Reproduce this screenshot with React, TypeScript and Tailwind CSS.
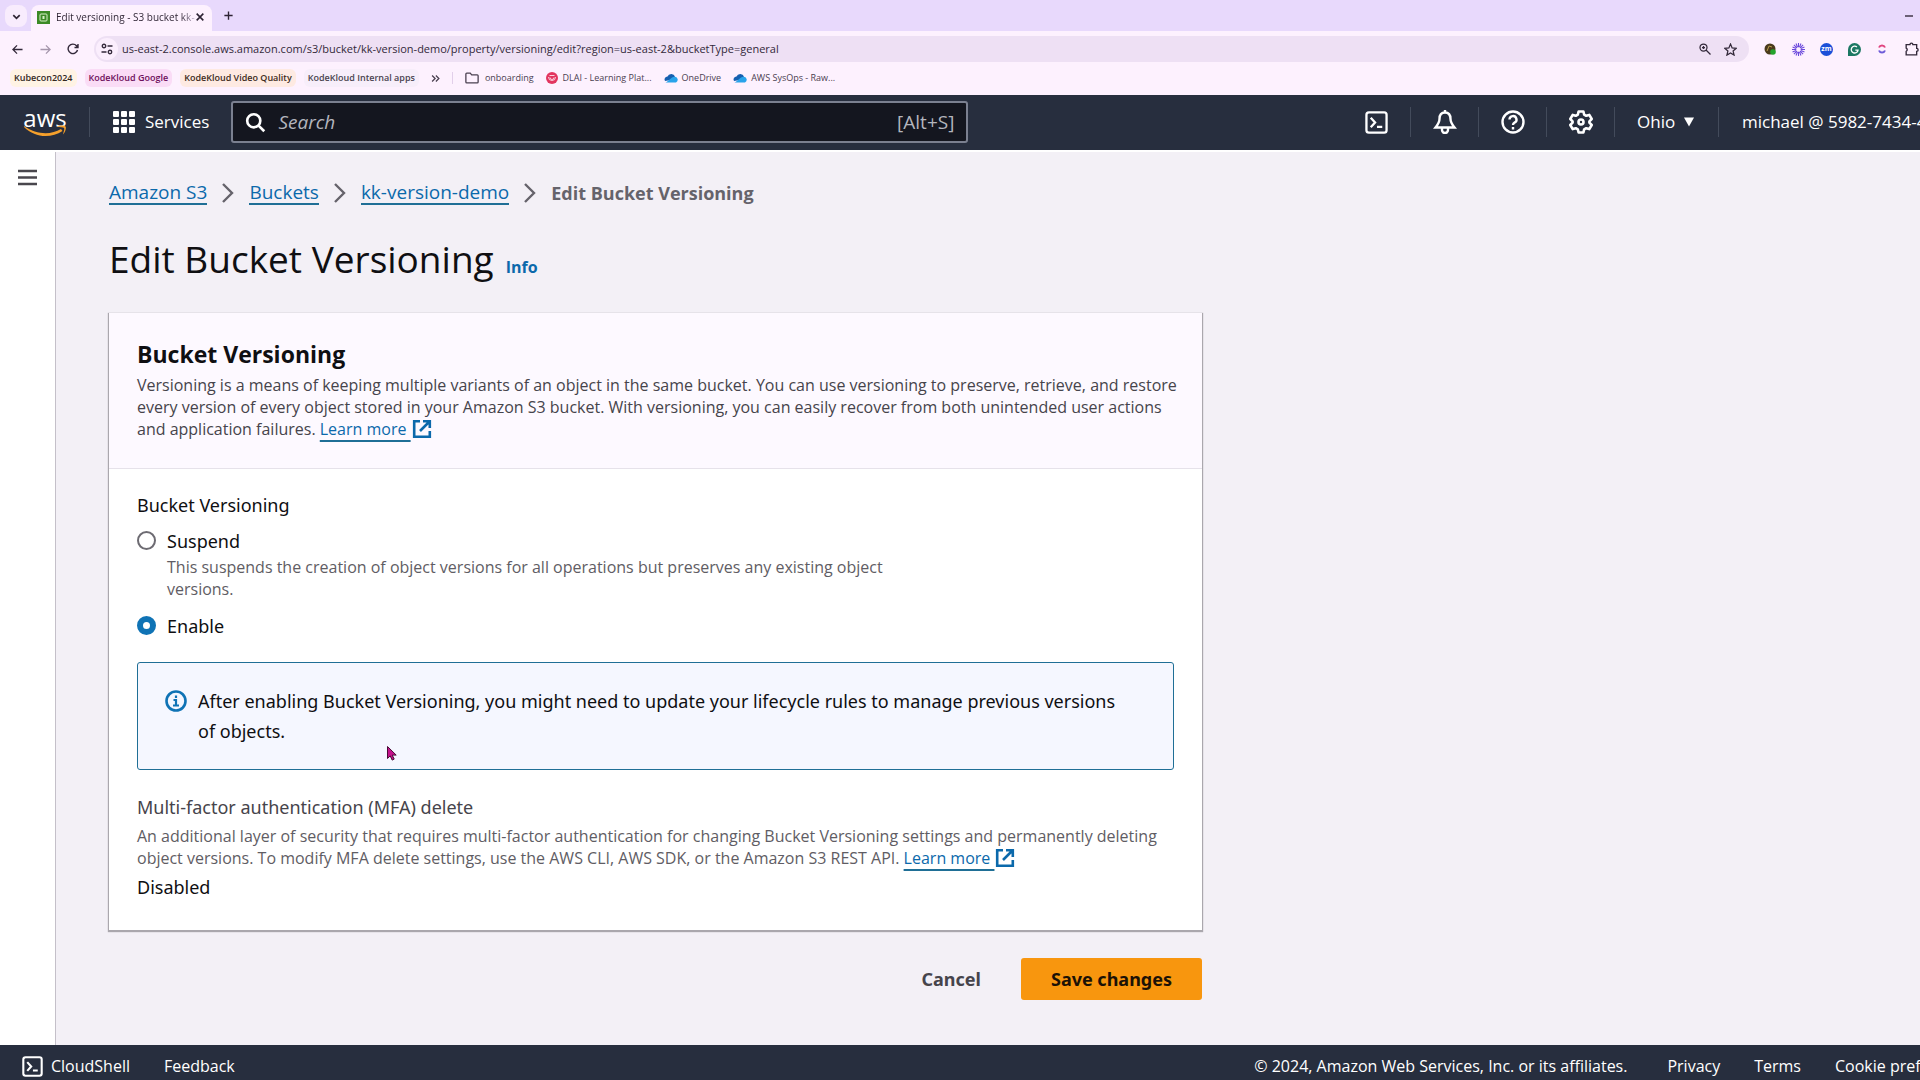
import { useState, type ReactNode } from "react";

function Stroke({ size, children, width = 2, className = "" }: { size: number; children: ReactNode; width?: number; className?: string }) {
  return (
    <svg width={size} height={size} viewBox="0 0 24 24" fill="none" stroke="currentColor" strokeWidth={width} className={"shrink-0 " + className} aria-hidden="true">
      {children}
    </svg>
  );
}

function Terminal({ size }: { size: number }) {
  return (
    <Stroke size={size} width={2.4}>
      <rect x="1.5" y="1.5" width="21" height="21" rx="2.5" />
      <path d="M6 7l4.5 5L6 17M12.5 16.5h5.5" />
    </Stroke>
  );
}

function External() {
  return (
    <svg width="20" height="20" viewBox="0 0 20 20" fill="none" stroke="currentColor" strokeWidth="2.6" className="ml-px inline-block align-[-4px]" aria-hidden="true">
      <path d="M8 2.2H2.2v15.6h15.6V12M11 2.2h6.8V9M17.5 2.5L8 12" />
    </svg>
  );
}

function LearnMore() {
  return (
    <a href="#" className="whitespace-nowrap text-[#0b69ab] underline decoration-[#1f6f96] decoration-2 underline-offset-[5px]">
      Learn more&nbsp;<External />
    </a>
  );
}

function Cloud() {
  return (
    <svg width="14" height="10" viewBox="0 0 14 10" className="shrink-0" aria-hidden="true">
      <path d="M3.5 3.4A4 4 0 0 1 11 3.6L7 7 1 8A3 3 0 0 1 3.5 3.4z" fill="#1560b0" />
      <path d="M2 9.4L8 4.6a5 5 0 0 1 3-.9 3 3 0 0 1 1 5.7H3a3 3 0 0 1-2-1z" fill="#28a3ea" />
    </svg>
  );
}

function TabStrip() {
  return (
    <div className="flex h-[31px] items-end bg-[#e8d9fc] text-[#2d2333]">
      <button aria-label="Search tabs" className="mb-1 ml-[5px] flex h-[22px] w-[22px] items-center justify-center rounded-lg bg-[#f8ecfd]">
        <Stroke size={11} width={3.6}><path d="M5 9l7 7 7-7" /></Stroke>
      </button>
      <div className="ml-1 flex h-[26px] w-[181px] items-center rounded-t-lg bg-[#fdf1fe] pb-[2px] pl-[6px] pr-2">
        <svg width="13" height="13" viewBox="0 0 13 13" className="shrink-0" aria-hidden="true">
          <rect width="13" height="13" fill="#3c8a26" />
          <rect x="3" y="3" width="7" height="7" rx="1" fill="none" stroke="#d8f0c8" />
          <path d="M5.5 5h2v3h-2z" fill="#d8f0c8" />
        </svg>
        <span className="ml-[6px] whitespace-nowrap bg-gradient-to-r from-[#2d2333] from-90% to-[#cfc0d6] bg-clip-text text-[10px] text-transparent">
          Edit versioning - S3 bucket kk-
        </span>
        <button aria-label="Close tab" className="ml-auto"><Stroke size={10} width={3.8}><path d="M4 4l16 16M20 4L4 20" /></Stroke></button>
      </div>
      <button aria-label="New tab" className="mb-[10px] ml-[11px]"><Stroke size={11} width={3}><path d="M12 3v18M3 12h18" /></Stroke></button>
      <button aria-label="Minimize" className="mb-[11px] ml-auto mr-[7px]"><Stroke size={8} width={4}><path d="M0 12h24" /></Stroke></button>
    </div>
  );
}

function AddressRow() {
  return (
    <div className="flex h-9 items-center text-[#33293a]">
      <button aria-label="Back" className="ml-3"><Stroke size={11} width={2.8}><path d="M23 12H2M11 3l-9 9 9 9" /></Stroke></button>
      <button aria-label="Forward" className="ml-[17px] text-[#a596ac]"><Stroke size={11} width={2.8}><path d="M1 12h21M13 3l9 9-9 9" /></Stroke></button>
      <button aria-label="Reload" className="ml-4"><Stroke size={12} width={2.8}><path d="M21 14a9.500 9.500 0 1 1-2-8.500L22 9M22 2v7h-7" /></Stroke></button>
      <div className="ml-[15px] flex h-[26px] flex-1 items-center rounded-full bg-[#eee0f4] pl-[2px] pr-3">
        <button aria-label="Site information" className="flex h-[22px] w-[22px] items-center justify-center rounded-full bg-[#fbeefd]">
          <Stroke size={12} width={2.6}><circle cx="6" cy="6" r="3.500" /><path d="M13 6h10M1 18h10" /><circle cx="18" cy="18" r="3.500" /></Stroke>
        </button>
        <input aria-label="Address" className="ml-1 flex-1 bg-transparent text-[11px] outline-none" defaultValue="us-east-2.console.aws.amazon.com/s3/bucket/kk-version-demo/property/versioning/edit?region=us-east-2&bucketType=general" />
        <button aria-label="Zoom"><Stroke size={12} width={2.5}><circle cx="9" cy="9" r="7" /><path d="M14 14l9 9M6 9h6M9 6v6" /></Stroke></button>
        <button aria-label="Bookmark this page" className="ml-[13px]"><Stroke size={13} width={2.3}><path d="M12 2l3 7.200 7.500.6-5.700 5 1.800 7.500L12 18.300l-6.600 4 1.800-7.500-5.700-5 7.500-.6z" /></Stroke></button>
      </div>
      <div className="ml-[15px] flex items-center">
        <svg width="12" height="12" viewBox="0 0 12 12" aria-hidden="true"><circle cx="6" cy="6" r="5.500" fill="#4a3a1c" /><path d="M3 8l2-5 3 1" stroke="#b79a4a" fill="none" /><circle cx="9" cy="9" r="2.800" fill="#24a42c" /></svg>
        <svg width="13" height="13" viewBox="0 0 24 24" stroke="#6a48dc" strokeWidth="2" className="ml-4" aria-hidden="true"><path d="M12 0v8M12 16v8M0 12h8M16 12h8M3.500 3.500L9 9M15 15l5.500 5.500M20.500 3.500L15 9M9 15l-5.500 5.500M7.400 1l2.800 6.800M13.800 16.200L16.600 23M1 16.600l6.800-2.800M16.200 10.200L23 7.400M1 7.400l6.800 2.800M16.200 13.800L23 16.600M16.600 1l-2.800 6.800M10.200 16.200L7.400 23" /></svg>
        <span className="ml-[15px] flex h-[13px] w-[13px] items-center justify-center rounded-full bg-[#1c50d8] text-[7px] font-bold text-white">zm</span>
        <svg width="13" height="13" viewBox="0 0 24 24" className="ml-[15px]" aria-hidden="true"><path d="M12 0a12 12 0 1 1 0 24H0V12A12 12 0 0 1 12 0z" fill="#1c7863" /><path d="M16.500 7.500a6.300 6.300 0 1 0 2 5.500h-5" stroke="#fff" strokeWidth="2.400" fill="none" /></svg>
        <svg width="10" height="12" viewBox="0 0 10 12" fill="none" strokeWidth="2" className="ml-4" aria-hidden="true"><path d="M2 4.500a3.200 3.200 0 0 1 6 0" stroke="#e0447e" /><path d="M2 7.500a3.200 3.200 0 0 0 6 0" stroke="#6d5bd8" /></svg>
        <button aria-label="Extensions" className="ml-[18px] mr-px">
          <Stroke size={14} width={2.3}><path d="M2 4.500h6.500a2.500 2.500 0 0 1 5 0H20V11a2.500 2.500 0 0 1 0 5v6H2v-6a3 3 0 0 0 0-5.500z" /></Stroke>
        </button>
      </div>
    </div>
  );
}

function BookmarkRow() {
  const chip = "rounded-md px-1 py-[2px] font-semibold";
  return (
    <nav aria-label="Bookmarks" className="flex h-7 items-center whitespace-nowrap pb-[6px] pl-[10px] text-[9px] text-[#4a4050]">
      <a href="#" className={chip + " bg-[#fff3e4] text-[#33291f]"}>Kubecon2024</a>
      <a href="#" className={chip + " ml-2 bg-[#fadcf6] text-[#6d0f5c]"}>KodeKloud Google</a>
      <a href="#" className={chip + " ml-2 bg-[#feeae2] text-[#3d2a20]"}>KodeKloud Video Quality</a>
      <a href="#" className={chip + " ml-2 bg-[#f7eefa] text-[#4a4450]"}>KodeKloud Internal apps</a>
      <button aria-label="More bookmarks" className="ml-3"><Stroke size={9} width={3.4}><path d="M3 4l8 8-8 8M13 4l8 8-8 8" /></Stroke></button>
      <span className="ml-3 h-3 w-px bg-[#e2cfea]" />
      <a href="#" className="ml-3 flex items-center gap-[6px]">
        <Stroke size={14} width={2.2}><path d="M1.500 5a1.500 1.500 0 0 1 1.500-1.500h6l2.500 3H21A1.500 1.500 0 0 1 22.500 8v11a1.500 1.500 0 0 1-1.500 1.500H3A1.500 1.500 0 0 1 1.500 19z" /></Stroke>
        onboarding
      </a>
      <a href="#" className="ml-3 flex items-center gap-[5px]">
        <svg width="12" height="12" viewBox="0 0 12 12" fill="none" aria-hidden="true"><circle cx="6" cy="6" r="6" fill="#e2355f" /><path d="M2.500 5a3.500 3.500 0 0 0 7 0M4 5.500a2 2 0 0 0 4 0M3.500 3.500h5" stroke="#fbd0dc" /></svg>
        DLAI - Learning Plat...
      </a>
      <a href="#" className="ml-3 flex items-center gap-1"><Cloud />OneDrive</a>
      <a href="#" className="ml-3 flex items-center gap-1"><Cloud />AWS SysOps - Raw...</a>
    </nav>
  );
}

function Divider({ className = "" }: { className?: string }) {
  return <span className={"h-[30px] w-px shrink-0 bg-[#434b5b] " + className} />;
}

function Header() {
  return (
    <header className="flex h-[55px] items-center whitespace-nowrap bg-[#272e3e] pb-px text-[17px] text-white">
      <a href="#" aria-label="AWS console home" className="ml-[23px] flex w-11 flex-col items-center">
        <span className="-mb-1 text-[24px] leading-5">aws</span>
        <svg width="44" height="13" viewBox="0 0 44 13" aria-hidden="true">
          <path d="M1 2C14 11 28 11 38 5l1.500 2C28 14.500 12 14 1 3z" fill="#f5a02c" />
          <path d="M33.500 2.800c4-1.600 8-1.500 9-.4s0 5.500-2.600 8.100c.9-2.900 1.900-5.800 1.200-6.500s-4.200-.6-7.600-1.200z" fill="#f5a02c" />
        </svg>
      </a>
      <Divider className="ml-[22px]" />
      <button className="ml-[23px] flex items-center gap-[10px]">
        <svg width="22" height="22" viewBox="0 0 22 22" fill="currentColor" aria-hidden="true">
          {[0, 8, 16].map((y) => [0, 8, 16].map((x) => <rect key={x + "-" + y} x={x} y={y} width="6" height="6" rx="1" />))}
        </svg>
        Services
      </button>
      <label className="ml-[22px] flex h-[42px] w-[737px] items-center rounded-[3px] border-2 border-[#7b8090] bg-[#14161f] px-3">
        <Stroke size={21} width={3}><circle cx="10" cy="10" r="7.500" /><path d="M15.500 15.500L22 22" /></Stroke>
        <input type="search" aria-label="Search" placeholder="Search" className="ml-3 min-w-0 flex-1 bg-transparent text-[19px] outline-none placeholder:italic placeholder:text-[#b3b5bd]" />
        <span className="text-[19px] text-[#b3b5bd]">[Alt+S]</span>
      </label>
      <div className="ml-auto flex items-center">
        <button aria-label="CloudShell" className="flex w-[68px] justify-center"><Terminal size={23} /></button>
        <Divider />
        <button aria-label="Notifications" className="flex w-[67px] justify-center">
          <Stroke size={24} width={2.4}><path d="M12 2.500c-4 0-5.500 3-5.500 6.500 0 3.500-2 6-4 8.500h19c-2-2.500-4-5-4-8.500 0-3.500-1.500-6.500-5.500-6.500zM12 0v3M9 18v2a3 3 0 0 0 6 0v-2" /></Stroke>
        </button>
        <Divider />
        <button aria-label="Help" className="flex w-[67px] justify-center">
          <Stroke size={24} width={2.4}><circle cx="12" cy="12" r="10.500" /><path d="M8.500 9.500a3.500 3.500 0 1 1 5 3.200c-1 .5-1.500 1-1.500 2.300M12 17v2.400" /></Stroke>
        </button>
        <Divider />
        <button aria-label="Settings" className="flex w-[67px] justify-center">
          <Stroke size={24} width={2.6}>
            <path strokeLinejoin="round" d="M9.600 1.500h4.800l.8 3.200 2 1.100 3.100-.9 2.400 4.100L20.400 11.300v1.400l2.300 2.300-2.400 4.100-3.100-.9-2 1.100-.8 3.200H9.600l-.8-3.200-2-1.100-3.100.9L1.300 15l2.300-2.300v-1.400L1.300 9l2.400-4.100 3.100.9 2-1.100z" />
            <circle cx="12" cy="12" r="2.500" />
          </Stroke>
        </button>
        <Divider />
        <button className="flex w-[103px] items-center pl-[22px]">
          Ohio
          <svg width="12" height="10" viewBox="0 0 12 10" fill="currentColor" className="ml-2" aria-hidden="true"><path d="M1 .5h10L6 9.500z" /></svg>
        </button>
        <Divider />
        <button className="w-[201px] overflow-hidden pl-[23px] text-left">michael @ 5982-7434-4</button>
      </div>
    </header>
  );
}

function Crumb({ children }: { children: ReactNode }) {
  return (
    <li className="flex items-center">
      <a href="#" className="border-b-2 border-[#1f6f96] leading-[22px] text-[#0b69ab]">{children}</a>
      <svg width="14" height="20" viewBox="0 0 14 20" fill="none" stroke="#65636b" strokeWidth="2.400" className="mx-[14px]" aria-hidden="true"><path d="M2 1l9 9-9 9" /></svg>
    </li>
  );
}

function Radio({ label, checked, onChange, children }: { label: string; checked: boolean; onChange: () => void; children?: ReactNode }) {
  return (
    <label className="flex items-start gap-[11px]">
      <input
        type="radio"
        name="versioning"
        checked={checked}
        onChange={onChange}
        className="mt-[5px] h-[19px] w-[19px] shrink-0 appearance-none rounded-full border-2 border-[#6d6b72] bg-white checked:border-[6px] checked:border-[#0f73b5]"
      />
      <span className="text-[18px] leading-[30px] text-[#0f0f12]">
        {label}
        {children}
      </span>
    </label>
  );
}

export default function App() {
  const [enabled, setEnabled] = useState(true);
  return (
    <div className="flex min-h-screen flex-col overflow-hidden bg-[#f3f0f6] font-['Open_Sans',sans-serif]">
      <div className="bg-[#fdf1fe]">
        <TabStrip />
        <AddressRow />
        <BookmarkRow />
      </div>
      <Header />
      <div className="flex flex-1 border-t-2 border-white">
        <aside className="w-14 shrink-0 border-r border-[#c4c0c9] bg-white">
          <button aria-label="Open navigation" className="ml-[18px] mt-4">
            <svg width="19" height="19" viewBox="0 0 19 19" stroke="#49474d" strokeWidth="2.600" aria-hidden="true"><path d="M0 3h19M0 9.500h19M0 16h19" /></svg>
          </button>
        </aside>
        <main className="flex-1 pl-[53px]">
          <nav aria-label="Breadcrumb" className="mt-[29px]">
            <ol className="flex h-6 items-center text-[19px]">
              <Crumb>Amazon S3</Crumb>
              <Crumb>Buckets</Crumb>
              <Crumb>kk-version-demo</Crumb>
              <li className="text-[18px] font-bold text-[#65636b]">Edit Bucket Versioning</li>
            </ol>
          </nav>
          <div className="mt-[30px] flex items-baseline gap-3">
            <h1 className="text-[37px] leading-[48px] text-[#0f0f12]">Edit Bucket Versioning</h1>
            <a href="#" className="text-[16px] font-bold text-[#0b69ab]">Info</a>
          </div>
          <form className="mt-[30px] max-w-[1093px]" onSubmit={(e) => e.preventDefault()}>
            <section className="bg-white font-['Noto_Sans',sans-serif] shadow-[0_1px_1px_1px_rgba(60,58,66,0.4)]">
              <div className="border-b border-[#e6e2ea] bg-[#fdf9ff] pb-[28px] pl-7 pr-5 pt-[23px] font-['Open_Sans',sans-serif]">
                <h2 className="text-[23px] font-bold leading-[36px] text-[#0f0f12]">Bucket Versioning</h2>
                <p className="mt-[2px] text-[16px] leading-[22px] text-[#46444b]">
                  Versioning is a means of keeping multiple variants of an object in the same bucket. You can use versioning to preserve, retrieve, and restore every version of every object stored in your Amazon S3 bucket. With versioning, you can easily recover from both unintended user actions and application failures. <LearnMore />
                </p>
              </div>
              <div className="px-7 pb-7 pt-[21px]">
                <fieldset>
                  <legend className="text-[18px] leading-[30px] text-[#0f0f12]">Bucket Versioning</legend>
                  <div className="mt-[6px] flex flex-col gap-[11px]">
                    <Radio label="Suspend" checked={!enabled} onChange={() => setEnabled(false)}>
                      <span className="block max-w-[730px] font-['Open_Sans',sans-serif] text-[16px] leading-[22px] text-[#5f5d64]">
                        This suspends the creation of object versions for all operations but preserves any existing object versions.
                      </span>
                    </Radio>
                    <Radio label="Enable" checked={enabled} onChange={() => setEnabled(true)} />
                  </div>
                </fieldset>
                <div role="status" className="relative mt-[21px] flex gap-[11px] rounded-[3px] border border-[#1f6f96] bg-[#f5f7ff] py-[23px] pl-[27px] pr-11">
                  <svg width="22" height="22" viewBox="0 0 22 22" fill="none" stroke="#0f73b5" strokeWidth="2.600" className="mt-1 shrink-0" aria-hidden="true">
                    <circle cx="11" cy="11" r="9.500" />
                    <path d="M8.500 10H11v5.500M8 15.500h6M11 5.500v2.500" strokeWidth="2.200" />
                  </svg>
                  <p className="text-[18px] leading-[30px] text-[#0f0f12]">
                    After enabling Bucket Versioning, you might need to update your lifecycle rules to manage previous versions of objects.
                  </p>
                  <svg width="10" height="15" viewBox="0 0 10 15" className="absolute left-[249px] top-[83px]" aria-hidden="true">
                    <path d="M.5.500v12l2.700-2.600 2 4.200 2-1-2-4h4z" fill="#c4128c" stroke="#4a0a36" />
                  </svg>
                </div>
                <h3 className="mt-[22px] text-[18px] leading-[30px] text-[#46444b]">Multi-factor authentication (MFA) delete</h3>
                <p className="mt-[3px] font-['Open_Sans',sans-serif] text-[16px] leading-[22px] text-[#5f5d64]">
                  An additional layer of security that requires multi-factor authentication for changing Bucket Versioning settings and permanently deleting object versions. To modify MFA delete settings, use the AWS CLI, AWS SDK, or the Amazon S3 REST API. <LearnMore />
                </p>
                <p className="mt-[3px] text-[18px] leading-[30px] text-[#0f0f12]">Disabled</p>
              </div>
            </section>
            <div className="mt-7 flex items-center justify-end gap-10 font-['Noto_Sans',sans-serif] text-[18px] font-bold">
              <button type="button" className="text-[#46444b]">Cancel</button>
              <button type="submit" className="h-[42px] rounded-[3px] bg-[#f8960e] px-[30px] text-[#1c1206]">Save changes</button>
            </div>
          </form>
        </main>
      </div>
      <footer className="flex h-[35px] items-center whitespace-nowrap bg-[#272e3e] pl-[22px] pt-[7px] text-[16px] leading-[22px] text-white">
        <button className="flex items-center gap-2"><Terminal size={21} />CloudShell</button>
        <a href="#" className="ml-[34px]">Feedback</a>
        <span className="ml-auto">© 2024, Amazon Web Services, Inc. or its affiliates.</span>
        <a href="#" className="ml-10">Privacy</a>
        <a href="#" className="ml-[34px]">Terms</a>
        <a href="#" className="ml-[34px] w-[85px] overflow-hidden">Cookie preferences</a>
      </footer>
    </div>
  );
}
